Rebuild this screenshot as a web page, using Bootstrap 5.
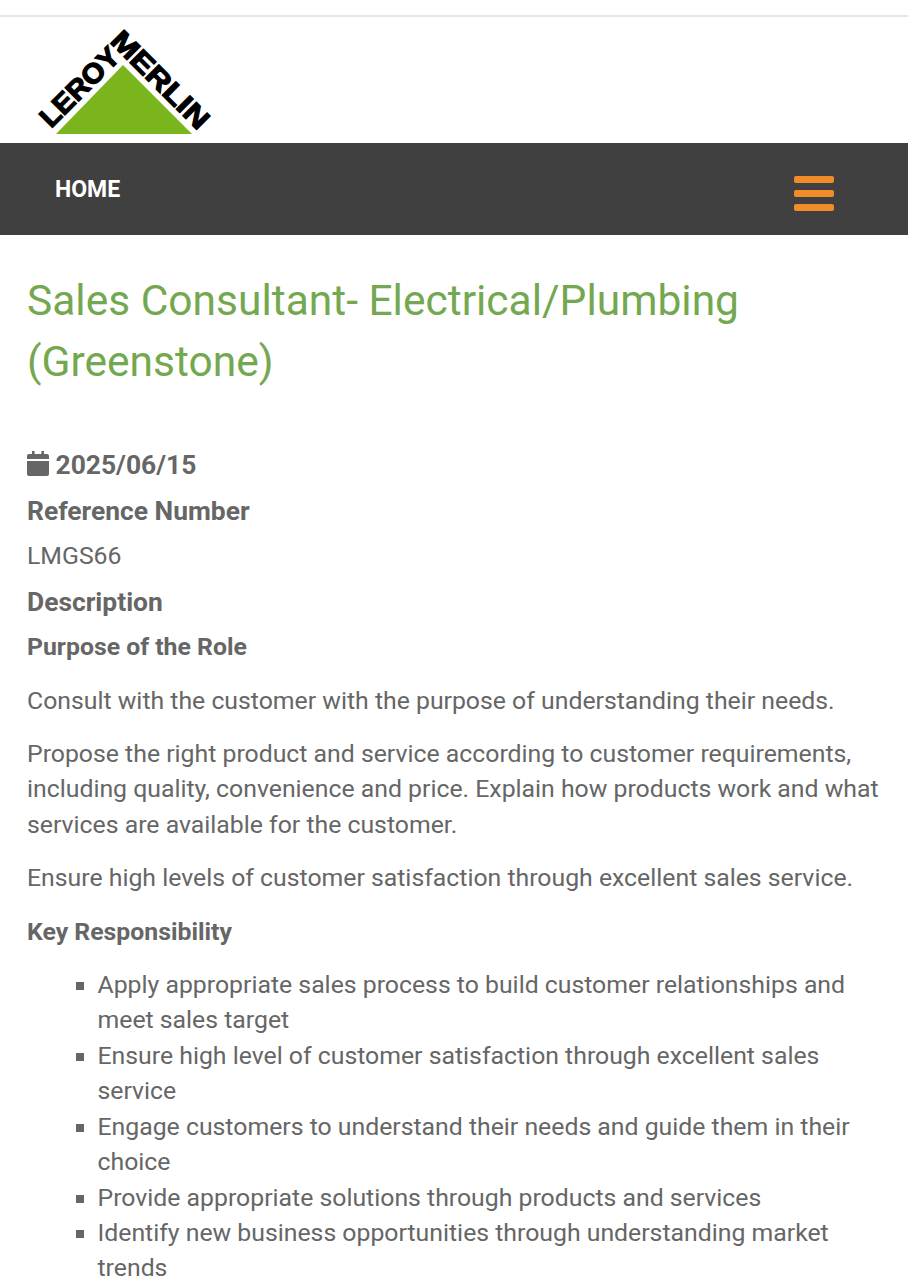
<!DOCTYPE html>
<html lang="en">
<head>
<meta charset="utf-8">
<title>Sales Consultant</title>
<link rel="stylesheet" href="https://cdn.jsdelivr.net/npm/bootstrap@5.3.0/dist/css/bootstrap.min.css">
<style>
html,body{margin:0;background:#fff}
body{font-family:Roboto,"Liberation Sans",sans-serif;font-size:24.8px;line-height:35.4px;color:#666;overflow:hidden;height:1280px}
.topgap{height:17px;border-bottom:2px solid #e6e6e6}
.logobar{height:126px;padding-left:34px}
.logobar svg{display:block}
.mainbar{height:92px;background:#404040}
.homelink{color:#fff;font-size:23px;font-weight:700;text-decoration:none;padding-left:55px;line-height:92px;margin-top:1px}
.burger{width:40px;margin-right:74px;margin-top:9px;gap:7px}
.burger span{display:block;height:7px;border-radius:2px;background:#f28c28}
.jobbody{padding:0 27px}
.jobtitle{font-family:Roboto,sans-serif;font-size:42.5px;line-height:61px;font-weight:400;color:#74a850;margin:35px 0 0}
.jobdate{font-size:26.4px;font-weight:700;line-height:36px;margin-top:55px}
.jobdate svg{vertical-align:-2px}
.lbl{font-weight:700;line-height:35.4px;margin-top:10px}
.lbl.big{font-size:26.4px}
.ref{margin-top:11px}
.plain{line-height:35.4px;margin-top:9px}
.desc{margin-top:11px}
.role{margin-top:9px}
.txt{margin:0 0 18px}
.intro{margin-top:18px}
.duties{list-style:square;margin:0;padding-left:70.500px}
</style>
</head>
<body>
<div class="topgap"></div>
<div class="logobar">
<svg width="190" height="126" viewBox="0 0 190 126" role="img" aria-label="Leroy Merlin">
<text transform="translate(17,112) rotate(-45)" font-family="Liberation Sans" font-weight="700" font-size="28" fill="#000" stroke="#000" stroke-width="1.200" textLength="100" lengthAdjust="spacingAndGlyphs">LEROY</text>
<text transform="translate(75,25) rotate(45)" font-family="Liberation Sans" font-weight="700" font-size="28" fill="#000" stroke="#000" stroke-width="1.200" textLength="126" lengthAdjust="spacingAndGlyphs">MERLIN</text>
<polygon points="89,48 22,117 158,117" fill="#7ab51d" stroke="#fff" stroke-width="1.500" paint-order="stroke"/>
</svg>
</div>
<nav class="mainbar d-flex justify-content-between align-items-center">
<a class="homelink" href="#">HOME</a>
<div class="burger d-flex flex-column"><span></span><span></span><span></span></div>
</nav>
<main class="jobbody">
<h1 class="jobtitle">Sales Consultant- Electrical/Plumbing (Greenstone)</h1>
<div class="jobdate"><svg width="22" height="25" viewBox="0 0 22 25" aria-hidden="true"><path fill="#666" d="M5 0h2.600v3H14.400V0H17v3h3a2 2 0 0 1 2 2v3H0V5a2 2 0 0 1 2-2h3zM0 10h22v13a2 2 0 0 1-2 2H2a2 2 0 0 1-2-2z"/></svg> 2025/06/15</div>
<div class="lbl big ref">Reference Number</div>
<div class="plain">LMGS66</div>
<div class="lbl big desc">Description</div>
<div class="lbl role">Purpose of the Role</div>
<p class="txt intro">Consult with the customer with the purpose of understanding their needs.</p>
<p class="txt">Propose the right product and service according to customer requirements, including quality, convenience and price. Explain how products work and what services are available for the customer.</p>
<p class="txt">Ensure high levels of customer satisfaction through excellent sales service.</p>
<p class="txt fw-bold">Key Responsibility</p>
<ul class="duties">
<li>Apply appropriate sales process to build customer relationships and meet sales target</li>
<li>Ensure high level of customer satisfaction through excellent sales service</li>
<li>Engage customers to understand their needs and guide them in their choice</li>
<li>Provide appropriate solutions through products and services</li>
<li>Identify new business opportunities through understanding market trends</li>
</ul>
</main>
<script src="https://cdn.jsdelivr.net/npm/bootstrap@5.3.0/dist/js/bootstrap.bundle.min.js"></script>
</body>
</html>
